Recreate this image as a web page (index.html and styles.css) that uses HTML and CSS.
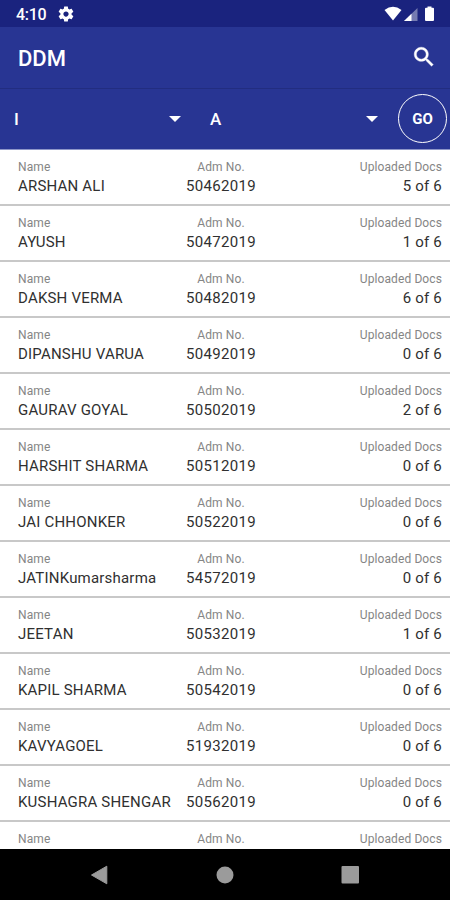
FILE: index.html
```html
<!DOCTYPE html>
<html lang="en">
<head>
    <meta charset="UTF-8">
    <meta name="viewport" content="width=device-width, initial-scale=1.0">
    <title>DDM</title>
    <link rel="stylesheet" href="styles.css">
</head>
<body>
    <div class="status-bar">
        <span class="time">4:10</span>
        <svg class="gear" width="18" height="18" viewBox="0 0 24 24"><path fill="#fff" d="M19.43 12.98c.04-.32.07-.64.07-.98s-.03-.66-.07-.98l2.11-1.65c.19-.15.24-.42.12-.64l-2-3.46c-.12-.22-.39-.3-.61-.22l-2.49 1c-.52-.4-1.08-.73-1.69-.98l-.38-2.65C14.46 2.18 14.25 2 14 2h-4c-.25 0-.46.18-.49.42l-.38 2.65c-.61.25-1.17.59-1.69.98l-2.49-1c-.23-.09-.49 0-.61.22l-2 3.46c-.13.22-.07.49.12.64l2.11 1.65c-.04.32-.07.65-.07.98s.03.66.07.98l-2.11 1.65c-.19.15-.24.42-.12.64l2 3.46c.12.22.39.3.61.22l2.49-1c.52.4 1.08.73 1.69.98l.38 2.65c.03.24.24.42.49.42h4c.25 0 .46-.18.49-.42l.38-2.65c.61-.25 1.17-.59 1.69-.98l2.49 1c.23.09.49 0 .61-.22l2-3.46c.12-.22.07-.49-.12-.64l-2.11-1.65zM12 15.5c-1.93 0-3.5-1.57-3.5-3.5s1.57-3.5 3.5-3.5 3.5 1.57 3.5 3.5-1.57 3.5-3.5 3.5z"/></svg>
        <svg class="signals" width="52" height="18" viewBox="0 0 52 18">
            <path fill="#fff" d="M0.5 5 Q9 -1.5 17.500 5 L9 15.500Z"/>
            <path fill="#fff" fill-opacity=".4" d="M33.500 3v13H20z"/>
            <path fill="#fff" d="M27.500 8.800V16H20z"/>
            <path fill="#fff" d="M43.500 1.500h4v1.300h1.500q1 0 1 1V15q0 1-1 1h-7q-1 0-1-1V3.800q0-1 1-1h1.500z"/>
        </svg>
    </div>

    <header class="app-bar">
        <h1>DDM</h1>
        <svg width="26" height="26" viewBox="0 0 24 24"><path fill="#fff" stroke="#fff" stroke-width=".4" d="M15.500 14h-.79l-.28-.27C15.410 12.590 16 11.110 16 9.500 16 5.910 13.090 3 9.500 3S3 5.910 3 9.500 5.910 16 9.500 16c1.610 0 3.090-.59 4.230-1.570l.27.28v.79l5 4.990L20.490 19l-4.990-5zm-6 0C7.010 14 5 11.990 5 9.500S7.010 5 9.500 5 14 7.010 14 9.500 11.990 14 9.500 14z"/></svg>
    </header>

    <div class="filters">
        <div class="select">I</div>
        <div class="select">A</div>
        <button class="go" type="button">GO</button>
    </div>

    <main class="list" id="list"></main>

    <nav class="nav-bar">
        <svg width="18" height="20" viewBox="0 0 18 20"><path fill="#9b9b9b" d="M15.800 1.200v17.600L0.500 10z" stroke="#9b9b9b" stroke-linejoin="round"/></svg>
        <svg width="18" height="18" viewBox="0 0 18 18"><circle cx="9" cy="9" r="8.500" fill="#9b9b9b"/></svg>
        <svg width="18" height="18" viewBox="0 0 18 18"><rect x=".5" width="17.500" height="17.500" rx="1" fill="#9b9b9b"/></svg>
    </nav>

    <script src="script.js"></script>
</body>
</html>
```

FILE: styles.css
```css
* {
    margin: 0;
    padding: 0;
    box-sizing: border-box;
}

body {
    font-family: Roboto, sans-serif;
    width: 450px;
    height: 900px;
    display: flex;
    flex-direction: column;
    overflow: hidden;
    background: #fff;
}

.status-bar {
    flex: none;
    height: 27px;
    padding: 1px 14px 0 16px;
    display: flex;
    align-items: center;
    background: #1a237e;
    color: #fff;
}

.time {
    width: 41px;
    font-size: 16px;
    font-weight: 500;
    letter-spacing: -0.3px;
}

.signals {
    margin-left: auto;
}

.app-bar {
    flex: none;
    height: 62px;
    padding: 1px 13px 0 18px;
    display: flex;
    align-items: center;
    justify-content: space-between;
    background: #283593;
    border-bottom: 1px solid #222d80;
    color: #fff;
}

.app-bar h1 {
    padding-top: 1px;
    font-size: 22px;
    font-weight: 500;
}

.app-bar svg {
    margin-bottom: 2px;
}

.filters {
    flex: none;
    height: 61px;
    padding: 0 3px 1px 14px;
    display: flex;
    align-items: center;
    background: #283593;
    border-bottom: 1px solid #8e96c8;
    color: #fff;
}

.select {
    width: 196px;
    padding-right: 29px;
    display: flex;
    align-items: center;
    justify-content: space-between;
    font-size: 17px;
    font-weight: 500;
}

.select::after {
    content: "";
    border: 6px solid transparent;
    border-top-color: #fff;
    border-bottom: 0;
}

.select + .select {
    width: 188px;
    padding-right: 20px;
}

.go {
    width: 49px;
    height: 49px;
    padding-top: 1px;
    border: 1.5px solid #fff;
    border-radius: 50%;
    background: none;
    color: #fff;
    font: 700 15px Roboto, sans-serif;
}

.list {
    flex: 1;
    min-height: 0;
    overflow: hidden;
}

.row {
    height: 56px;
    padding: 9px 8px 0 18px;
    display: grid;
    grid-template-columns: 165px 76px 1fr;
    border-bottom: 2px solid #c8c8c8;
    white-space: nowrap;
}

.cell:nth-child(2) {
    text-align: center;
}

.cell:nth-child(3) {
    text-align: right;
}

.label {
    font-size: 12px;
    line-height: 16px;
    letter-spacing: 0.1px;
    color: #858585;
}

.value {
    padding-top: 1px;
    font-size: 15px;
    line-height: 20px;
    letter-spacing: 0.2px;
    color: #303030;
}

.cell:nth-child(2) .value {
    letter-spacing: 0.3px;
}

.nav-bar {
    flex: none;
    height: 51px;
    padding: 0 91px;
    display: flex;
    align-items: center;
    justify-content: space-between;
    background: #000;
}
```

FILE: script.js
```js
const students = [
    ['ARSHAN ALI', '50462019', 5],
    ['AYUSH', '50472019', 1],
    ['DAKSH VERMA', '50482019', 6],
    ['DIPANSHU VARUA', '50492019', 0],
    ['GAURAV GOYAL', '50502019', 2],
    ['HARSHIT SHARMA', '50512019', 0],
    ['JAI CHHONKER', '50522019', 0],
    ['JATINKumarsharma', '54572019', 0],
    ['JEETAN', '50532019', 1],
    ['KAPIL SHARMA', '50542019', 0],
    ['KAVYAGOEL', '51932019', 0],
    ['KUSHAGRA SHENGAR', '50562019', 0],
    ['', '', null]
];

function cell(label, value) {
    return `<div class="cell"><div class="label">${label}</div><div class="value">${value}</div></div>`;
}

document.getElementById('list').innerHTML = students.map(([name, adm, docs]) =>
    `<div class="row">${cell('Name', name)}${cell('Adm No.', adm)}${cell('Uploaded Docs', docs === null ? '' : docs + ' of 6')}</div>`
).join('');
```
